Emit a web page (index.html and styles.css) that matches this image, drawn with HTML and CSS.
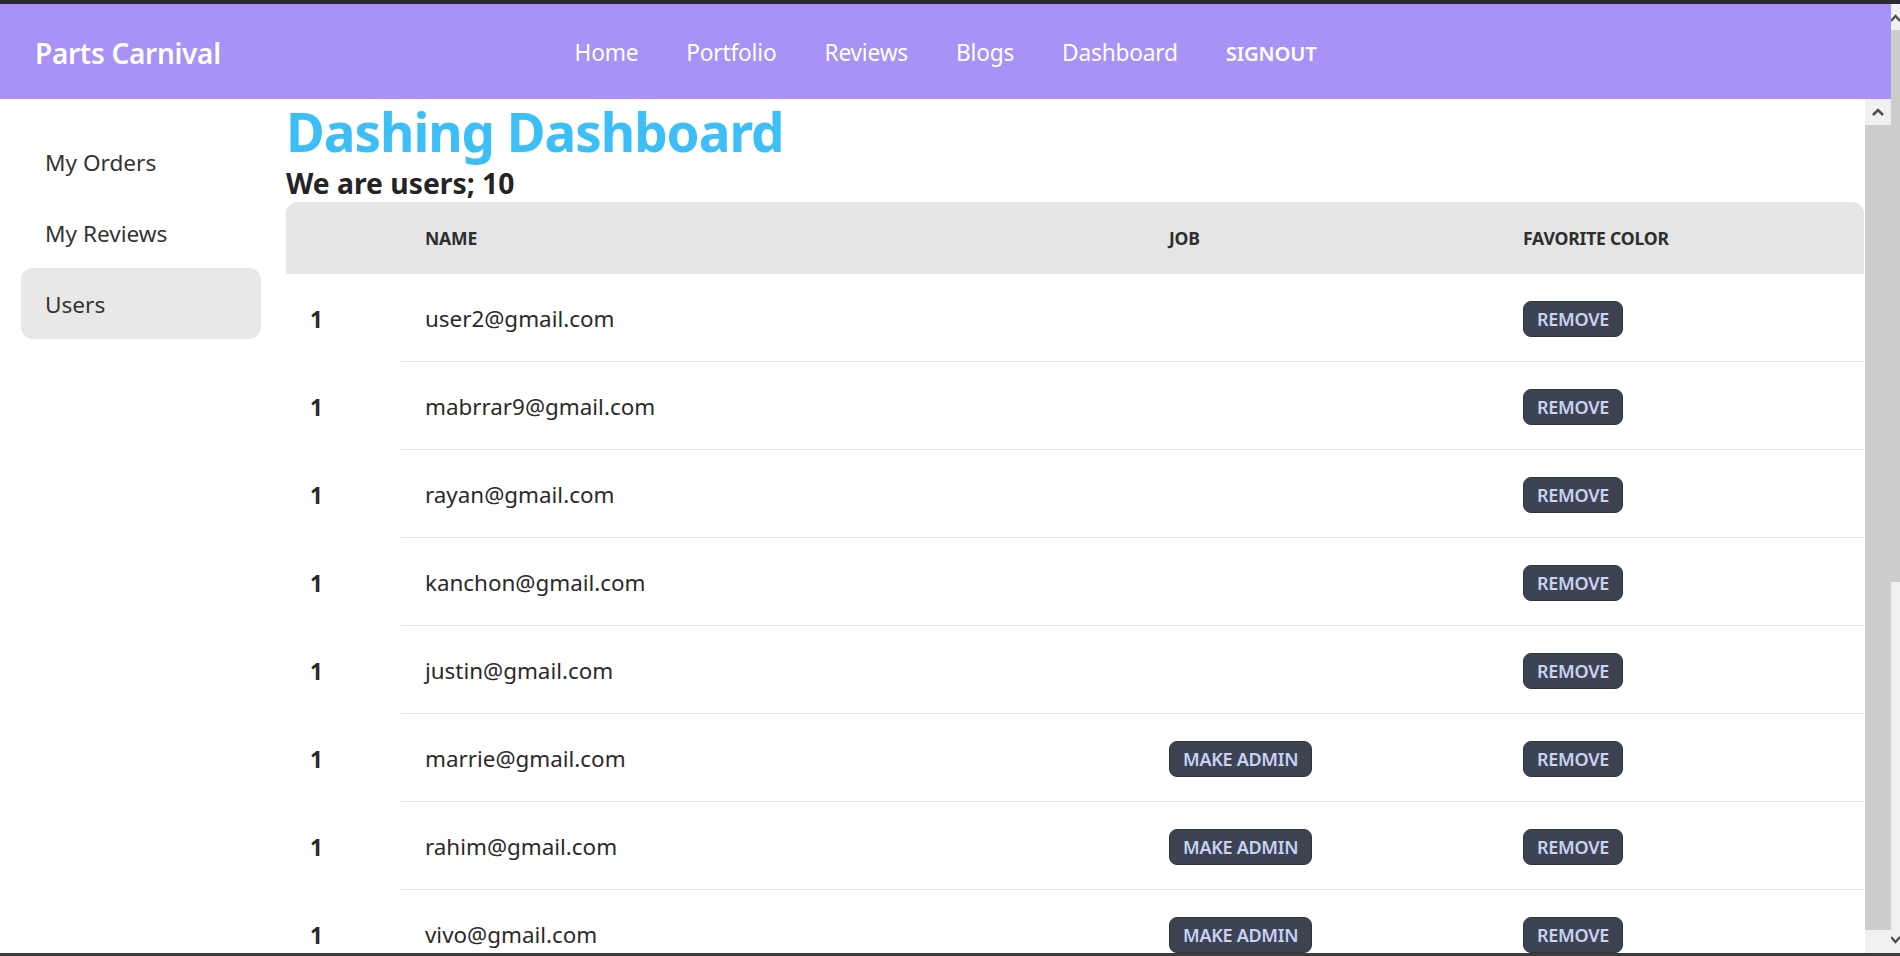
FILE: index.html
```html
<!DOCTYPE html>
<html lang="en">
<head>
<meta charset="utf-8">
<title>Parts Carnival - Dashboard</title>
<link rel="stylesheet" href="styles.css">
</head>
<body>
<div class="strip-top"></div>
<div class="window">
  <div class="app">
    <header class="navbar">
      <div class="nav-start"><a class="brand">Parts Carnival</a></div>
      <nav class="nav-center">
        <a class="nav-link">Home</a>
        <a class="nav-link">Portfolio</a>
        <a class="nav-link">Reviews</a>
        <a class="nav-link">Blogs</a>
        <a class="nav-link">Dashboard</a>
        <a class="nav-link nav-strong">SIGNOUT</a>
      </nav>
      <div class="nav-end"></div>
    </header>
    <div class="drawer">
      <aside class="side">
        <a class="side-item">My Orders</a>
        <a class="side-item">My Reviews</a>
        <a class="side-item side-active">Users</a>
      </aside>
      <main class="content">
        <h1 class="title">Dashing Dashboard</h1>
        <h2 class="subtitle">We are users; 10</h2>
        <div class="table-wrap">
          <table class="users">
            <colgroup>
              <col class="c-idx"><col class="c-name"><col class="c-job"><col class="c-fav">
            </colgroup>
            <thead>
              <tr><th></th><th>Name</th><th>Job</th><th>Favorite Color</th></tr>
            </thead>
            <tbody>
              <tr><th>1</th><td>user2@gmail.com</td><td></td><td><button class="btn">Remove</button></td></tr>
              <tr><th>1</th><td>mabrrar9@gmail.com</td><td></td><td><button class="btn">Remove</button></td></tr>
              <tr><th>1</th><td>rayan@gmail.com</td><td></td><td><button class="btn">Remove</button></td></tr>
              <tr><th>1</th><td>kanchon@gmail.com</td><td></td><td><button class="btn">Remove</button></td></tr>
              <tr><th>1</th><td>justin@gmail.com</td><td></td><td><button class="btn">Remove</button></td></tr>
              <tr><th>1</th><td>marrie@gmail.com</td><td><button class="btn">Make Admin</button></td><td><button class="btn">Remove</button></td></tr>
              <tr><th>1</th><td>rahim@gmail.com</td><td><button class="btn">Make Admin</button></td><td><button class="btn">Remove</button></td></tr>
              <tr><th>1</th><td>vivo@gmail.com</td><td><button class="btn">Make Admin</button></td><td><button class="btn">Remove</button></td></tr>
            </tbody>
          </table>
        </div>
      </main>
      <div class="sb sb-inner">
        <div class="sb-btn">
          <svg width="26" height="26" viewBox="0 0 26 26"><polyline points="8,16 13,11 18,16" fill="none" stroke="#505050" stroke-width="2.6"/></svg>
        </div>
        <div class="sb-thumb"></div>
        <div class="sb-btn sb-btn-bottom"></div>
      </div>
    </div>
  </div>
  <div class="sb sb-outer">
    <div class="sb-obtn">
      <svg width="17" height="26" viewBox="0 0 17 26"><polyline points="4,17 8.5,12 13,17" fill="none" stroke="#505050" stroke-width="2.4"/></svg>
    </div>
    <div class="sb-othumb"></div>
    <div class="sb-otrack"></div>
    <div class="sb-obtn sb-obtn-bottom">
      <svg width="17" height="26" viewBox="0 0 17 26"><polyline points="4,10 8.5,15 13,10" fill="none" stroke="#505050" stroke-width="2.4"/></svg>
    </div>
  </div>
</div>
<div class="strip-bottom"></div>
</body>
</html>
```

FILE: styles.css
```css
* { box-sizing: border-box; }

html, body {
  margin: 0;
  padding: 0;
  width: 1900px;
  height: 956px;
  overflow: hidden;
  background: #ffffff;
  font-family: "Noto Sans", "Open Sans", "Liberation Sans", sans-serif;
  color: #2a2a2a;
}

.strip-top { height: 4px; background: #2b2a33; }
.strip-bottom { height: 3px; background: #3c3c3c; }

.window {
  display: flex;
  height: 949px;
}

.app {
  width: 1891px;
  display: flex;
  flex-direction: column;
  height: 949px;
}

/* ---------- navbar ---------- */
.navbar {
  height: 95px;
  flex: none;
  padding-top: 2px;
  background: #a891f7;
  display: flex;
  align-items: center;
  color: #ffffff;
}
.nav-start, .nav-end { flex: 1 1 0; display: flex; align-items: center; }
.brand {
  padding-left: 35px;
  font-size: 28px;
  font-weight: 600;
  letter-spacing: -0.3px;
}
.nav-center { display: flex; align-items: center; }
.nav-link {
  padding: 0 24px;
  font-size: 22.7px;
  font-weight: 400;
  letter-spacing: -0.2px;
}
.nav-strong { font-weight: 600; font-size: 20.3px; }

/* ---------- drawer ---------- */
.drawer {
  flex: 1 1 auto;
  display: flex;
  min-height: 0;
}
.side {
  width: 286px;
  flex: none;
  padding: 27px 25px 0 21px;
  display: flex;
  flex-direction: column;
}
.side-item {
  height: 71px;
  display: flex;
  align-items: center;
  padding-left: 24px;
  padding-top: 1px;
  font-size: 22.6px;
  color: #333333;
  border-radius: 12px;
}
.side-active { background: #e8e8e8; }

.content {
  width: 1579px;
  flex: none;
  padding-top: 2px;
  display: flex;
  flex-direction: column;
  min-height: 0;
}
.title {
  margin: 0;
  flex: none;
  font-size: 53px;
  line-height: 62px;
  font-weight: 700;
  letter-spacing: -1.05px;
  color: #3bbff6;
}
.subtitle {
  margin: 3px 0 2px;
  flex: none;
  font-size: 28.3px;
  line-height: 34px;
  font-weight: 700;
  color: #242424;
}
.table-wrap {
  flex: 1 1 auto;
  min-height: 0;
  overflow: hidden;
}

/* ---------- table ---------- */
.users {
  width: 1578px;
  table-layout: fixed;
  border-collapse: separate;
  border-spacing: 0;
}
.c-idx { width: 115px; }
.c-name { width: 744px; }
.c-job { width: 354px; }
.c-fav { width: 365px; }

.users thead th {
  height: 72px;
  background: #e5e5e5;
  text-align: left;
  padding: 0 24px;
  font-size: 17.6px;
  font-weight: 700;
  text-transform: uppercase;
  color: #2e2e2e;
  letter-spacing: -0.2px;
}
.users thead th:first-child { border-top-left-radius: 12px; }
.users thead th:last-child { border-top-right-radius: 12px; }

.users tbody th,
.users tbody td {
  height: 88px;
  padding: 2px 24px 0;
  text-align: left;
  vertical-align: middle;
  font-size: 22.4px;
}
.users tbody th { font-weight: 700; color: #2a2a2a; }
.users tbody td {
  font-weight: 400;
  border-bottom: 1px solid #e4e4e4;
  color: #2a2a2a;
}

.btn {
  height: 36px;
  padding: 0 13px;
  border: 1px solid #2f3540;
  border-radius: 8px;
  background: #3d4451;
  color: #c9d2f2;
  font-family: "Noto Sans", "Open Sans", "Liberation Sans", sans-serif;
  font-size: 18px;
  font-weight: 600;
  text-transform: uppercase;
  letter-spacing: -0.3px;
  line-height: 34px;
}

/* ---------- scrollbars (drawn) ---------- */
.sb {
  flex: none;
  display: flex;
  flex-direction: column;
  background: #f0f0f0;
}
.sb-inner { width: 26px; }
.sb-btn { height: 26px; flex: none; background: #f0f0f0; }
.sb-btn svg { display: block; }
.sb-thumb { flex: 1 1 auto; background: #cdcdcd; }
.sb-btn-bottom { height: 23px; }

.sb-outer { width: 9px; overflow: hidden; }
.sb-obtn { height: 26px; flex: none; width: 17px; margin-left: -4px; }
.sb-obtn svg { display: block; }
.sb-othumb { height: 552px; flex: none; background: #cdcdcd; }
.sb-otrack { flex: 1 1 auto; }
.sb-obtn-bottom { height: 26px; }
```
